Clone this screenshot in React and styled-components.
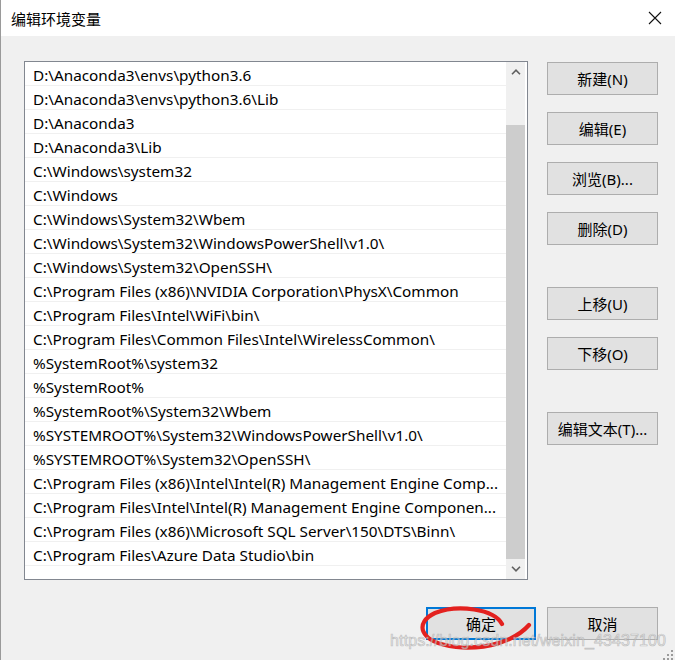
import React from 'react'
import styled, { createGlobalStyle } from 'styled-components'

const GlobalStyle = createGlobalStyle`
  html, body {
    margin: 0;
    padding: 0;
    background: #f0f0f0;
  }
`

const uiFont = `"Noto Sans", "Noto Sans CJK SC", sans-serif`

const Window = styled.div`
  position: relative;
  width: 675px;
  height: 660px;
  box-sizing: border-box;
  border-left: 1px solid #9a9a9a;
  background: #f0f0f0;
  font-family: ${uiFont};
  color: #000;
  overflow: hidden;
`

const TitleBar = styled.div`
  height: 36px;
  background: #fff;
  display: flex;
  align-items: center;
  justify-content: space-between;
  padding: 0 13px 0 10px;
`

const Title = styled.span`
  font-size: 15px;
  font-family: "Noto Sans CJK SC", sans-serif;
`

const CloseBox = styled.div`
  width: 14px;
  height: 14px;
  display: flex;
`

const Body = styled.div`
  display: flex;
  padding: 25px 17px 0 23px;
  gap: 19px;
`

const ListBox = styled.div`
  width: 504px;
  height: 519px;
  box-sizing: border-box;
  border: 1px solid #828790;
  background: #fff;
  display: flex;
`

const Rows = styled.div`
  flex: 1;
  min-width: 0;
`

const Row = styled.div`
  height: 24px;
  box-sizing: border-box;
  border-bottom: 1px solid #f0f0f0;
  padding: 2px 0 0 8px;
  display: flex;
  align-items: center;
  font-size: 15.3px;
  white-space: nowrap;
  overflow: hidden;
`

const ScrollBar = styled.div`
  width: 19px;
  margin-right: 2px;
  background: #f0f0f0;
  display: flex;
  flex-direction: column;
`

const ScrollArrow = styled.div`
  height: 20px;
  display: flex;
  align-items: center;
  justify-content: center;
`

const Track = styled.div`
  flex: 1;
  display: flex;
  flex-direction: column;
  padding-top: 43px;
`

const Thumb = styled.div`
  flex: 1;
  background: #cdcdcd;
`

const ButtonColumn = styled.div`
  width: 111px;
  padding-top: 1px;
  display: flex;
  flex-direction: column;
`

const Button = styled.button`
  width: ${p => p.$width || 111}px;
  height: 33px;
  box-sizing: border-box;
  margin-top: ${p => p.$gap || 0}px;
  background: #e1e1e1;
  border: ${p => (p.$primary ? '2px solid #0078d7' : '1px solid #adadad')};
  font-family: ${uiFont};
  font-size: 15px;
  color: #000;
  padding: 0;
  display: flex;
  align-items: center;
  justify-content: center;
`

const Footer = styled.div`
  display: flex;
  justify-content: flex-end;
  gap: 11px;
  padding: 27px 17px 0 0;
`

const Annotated = styled.div`
  position: relative;
`

const Scribble = styled.svg`
  position: absolute;
  left: -12px;
  top: -4px;
  pointer-events: none;
`

const Watermark = styled.div`
  position: absolute;
  right: 9px;
  bottom: 10px;
  font-family: "Liberation Sans", Arial, sans-serif;
  font-size: 16px;
  color: rgba(235, 235, 235, 0.55);
  -webkit-text-stroke: 0.7px rgba(150, 150, 150, 0.55);
  letter-spacing: 0.1px;
  pointer-events: none;
`

const Grip = styled.svg`
  position: absolute;
  right: 2px;
  bottom: 0;
`

const paths = [
  'D:\\Anaconda3\\envs\\python3.6',
  'D:\\Anaconda3\\envs\\python3.6\\Lib',
  'D:\\Anaconda3',
  'D:\\Anaconda3\\Lib',
  'C:\\Windows\\system32',
  'C:\\Windows',
  'C:\\Windows\\System32\\Wbem',
  'C:\\Windows\\System32\\WindowsPowerShell\\v1.0\\',
  'C:\\Windows\\System32\\OpenSSH\\',
  'C:\\Program Files (x86)\\NVIDIA Corporation\\PhysX\\Common',
  'C:\\Program Files\\Intel\\WiFi\\bin\\',
  'C:\\Program Files\\Common Files\\Intel\\WirelessCommon\\',
  '%SystemRoot%\\system32',
  '%SystemRoot%',
  '%SystemRoot%\\System32\\Wbem',
  '%SYSTEMROOT%\\System32\\WindowsPowerShell\\v1.0\\',
  '%SYSTEMROOT%\\System32\\OpenSSH\\',
  'C:\\Program Files (x86)\\Intel\\Intel(R) Management Engine Comp...',
  'C:\\Program Files\\Intel\\Intel(R) Management Engine Componen...',
  'C:\\Program Files (x86)\\Microsoft SQL Server\\150\\DTS\\Binn\\',
  'C:\\Program Files\\Azure Data Studio\\bin'
]

const sideButtons = [
  { label: '新建(N)', gap: 0 },
  { label: '编辑(E)', gap: 17 },
  { label: '浏览(B)...', gap: 17 },
  { label: '删除(D)', gap: 17 },
  { label: '上移(U)', gap: 42 },
  { label: '下移(O)', gap: 17 },
  { label: '编辑文本(T)...', gap: 42 }
]

const Chevron = ({ up }) => (
  <svg width="10" height="6" viewBox="0 0 10 6">
    <path
      d={up ? 'M1 5.2 L5 1.2 L9 5.2' : 'M1 0.8 L5 4.8 L9 0.8'}
      fill="none"
      stroke="#606060"
      strokeWidth="1.6"
    />
  </svg>
)

export default function App() {
  return (
    <>
      <GlobalStyle />
      <Window>
        <TitleBar>
          <Title>编辑环境变量</Title>
          <CloseBox>
            <svg width="14" height="14" viewBox="0 0 14 14">
              <path d="M1 1 L13 13 M13 1 L1 13" stroke="#111" strokeWidth="1.1" />
            </svg>
          </CloseBox>
        </TitleBar>

        <Body>
          <ListBox>
            <Rows>
              {paths.map(p => (
                <Row key={p}>{p}</Row>
              ))}
            </Rows>
            <ScrollBar>
              <ScrollArrow>
                <Chevron up />
              </ScrollArrow>
              <Track>
                <Thumb />
              </Track>
              <ScrollArrow>
                <Chevron />
              </ScrollArrow>
            </ScrollBar>
          </ListBox>

          <ButtonColumn>
            {sideButtons.map(b => (
              <Button key={b.label} $gap={b.gap}>
                {b.label}
              </Button>
            ))}
          </ButtonColumn>
        </Body>

        <Footer>
          <Annotated>
            <Button $primary $width={110}>确定</Button>
            <Scribble width="130" height="50" viewBox="0 0 130 50">
              <path
                d="M88 21 C80 6, 44 1, 21 10 C1 19, 3 39, 42 44 C72 47, 101 38, 115 22"
                fill="none"
                stroke="#e3211f"
                strokeWidth="4.2"
                strokeLinecap="round"
              />
            </Scribble>
          </Annotated>
          <Button>取消</Button>
        </Footer>

        <Watermark>https://blog.csdn.net/weixin_43437100</Watermark>

        <Grip width="10" height="10" viewBox="0 0 10 10">
          <rect x="8" y="0" width="2" height="2" fill="#9a9a9a" />
          <rect x="4" y="4" width="2" height="2" fill="#9a9a9a" />
          <rect x="8" y="4" width="2" height="2" fill="#9a9a9a" />
          <rect x="0" y="8" width="2" height="2" fill="#9a9a9a" />
          <rect x="4" y="8" width="2" height="2" fill="#9a9a9a" />
          <rect x="8" y="8" width="2" height="2" fill="#9a9a9a" />
        </Grip>
      </Window>
    </>
  )
}
